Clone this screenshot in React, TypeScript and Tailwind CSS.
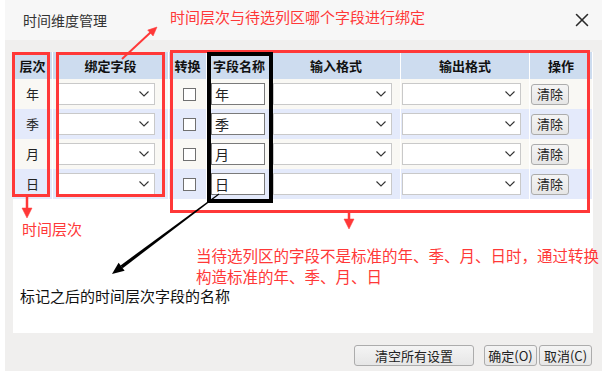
import { X } from "lucide-react";

type Row = { level: string; bg: string };

const ROWS: Row[] = [
  { level: "年", bg: "bg-[#f9f8f4]" },
  { level: "季", bg: "bg-[#e4eafb]" },
  { level: "月", bg: "bg-[#f9f8f4]" },
  { level: "日", bg: "bg-[#e4eafb]" },
];

const COLS = "grid grid-cols-[40px_116px_38px_65px_129px_129px_63px]";

function Chevron() {
  return (
    <svg width="10" height="6" viewBox="0 0 10 6" className="shrink-0">
      <polyline points="0.5,0.5 5,5 9.5,0.5" fill="none" stroke="#333" strokeWidth="1.1" />
    </svg>
  );
}

function Select({ w }: { w: string }) {
  return (
    <div className={`${w} h-[22px] bg-white border border-[#c9c9c9] flex items-center justify-end pr-[5px]`}>
      <Chevron />
    </div>
  );
}

function Cell({ children, className = "" }: { children?: React.ReactNode; className?: string }) {
  return <div className={`h-[30px] flex items-center border-r border-white ${className}`}>{children}</div>;
}

function Btn({ label, w }: { label: string; w: string }) {
  return (
    <div
      className={`${w} h-[21px] rounded-[3px] border border-[#acacac] bg-gradient-to-b from-[#f4f4f4] to-[#e6e6e6] flex items-center justify-center text-[13px] text-[#222]`}
    >
      {label}
    </div>
  );
}

export default function App() {
  return (
    <div className="relative w-[602px] h-[377px] bg-white overflow-hidden font-['Noto_Sans_CJK_SC','Noto_Sans',sans-serif] text-[#222]">
      <div className="ml-[5px] w-[597px] h-[371px] bg-[#f0efee] flex flex-col">
        {/* 标题栏 */}
        <div className="h-[40px] bg-[#f7f7f7] flex items-center justify-between pl-[18px] pr-[9px]">
          <span className="text-[14px] text-[#333]">时间维度管理</span>
          <X size={22} strokeWidth={1.7} className="text-[#2a2a2a]" />
        </div>

        {/* 表格区域 */}
        <div className="pt-[12px] pl-[8px]">
          <div className="w-[580px] h-[281px] bg-white">
            <div className={`${COLS} bg-[#cddcef] h-[27px] text-[13px] font-bold text-[#111]`}>
              {["层次", "绑定字段", "转换", "字段名称", "输入格式", "输出格式", "操作"].map((h) => (
                <div key={h} className="flex items-center justify-center border-r border-white">
                  {h}
                </div>
              ))}
            </div>
            {ROWS.map((r) => (
              <div key={r.level} className={`${COLS} ${r.bg} text-[13px]`}>
                <Cell className="justify-center">{r.level}</Cell>
                <Cell className="pl-[4px]">
                  <Select w="w-[98px]" />
                </Cell>
                <Cell className="justify-center pl-[3px]">
                  <div className="w-[13px] h-[13px] bg-white border border-[#707070]" />
                </Cell>
                <Cell className="pl-[4px]">
                  <div className="w-[54px] h-[22px] bg-white border border-[#7a7a7a] flex items-center pl-[3px] text-[14px]">
                    {r.level}
                  </div>
                </Cell>
                <Cell className="pl-[1px]">
                  <Select w="w-[119px]" />
                </Cell>
                <Cell className="pl-[1px]">
                  <Select w="w-[119px]" />
                </Cell>
                <Cell className="pl-[1px]">
                  <Btn label="清除" w="w-[38px]" />
                </Cell>
              </div>
            ))}
          </div>
        </div>

        {/* 底部按钮 */}
        <div className="flex justify-end pt-[12px] pr-[10px]">
          <Btn label="清空所有设置" w="w-[120px]" />
          <div className="ml-[10px]">
            <Btn label="确定(O)" w="w-[53px]" />
          </div>
          <div className="ml-[2px]">
            <Btn label="取消(C)" w="w-[53px]" />
          </div>
        </div>
      </div>

      {/* 标注层 */}
      <svg className="absolute inset-0 pointer-events-none" width="602" height="377" viewBox="0 0 602 377">
        <g fill="none" stroke="#ff3838" strokeWidth="3">
          <rect x="13.5" y="53.5" width="35" height="142" />
          <rect x="57.5" y="53.5" width="106" height="142" />
          <rect x="171.5" y="51.5" width="417" height="160" />
        </g>
        <rect x="209" y="54" width="62" height="147" fill="none" stroke="#000" strokeWidth="4" />

        <g fill="#ff3838" stroke="#ff3838">
          <line x1="122" y1="59" x2="151" y2="32" strokeWidth="2" />
          <polygon points="157,27 153.1,36 147.7,30.1" strokeWidth="0.5" />
          <line x1="27" y1="197" x2="27" y2="210" strokeWidth="2.5" />
          <polygon points="27,218 22,208 32,208" strokeWidth="0.5" />
          <line x1="349" y1="213" x2="349" y2="221" strokeWidth="2.5" />
          <polygon points="349,229 344,219 354,219" strokeWidth="0.5" />
        </g>

        <g fill="#000">
          <polygon points="219.3,194.4 218.7,193.6 120.5,265.4 122.7,268.2" />
          <polygon points="112,274 124.6,270.8 118.6,262.8" />
        </g>
      </svg>

      <div className="absolute left-[170px] top-[9px] text-[15px] leading-none text-[#ff3838] whitespace-nowrap">
        时间层次与待选列区哪个字段进行绑定
      </div>
      <div className="absolute left-[22px] top-[221px] text-[15px] leading-none text-[#ff3838]">时间层次</div>
      <div className="absolute left-[196px] top-[245px] text-[15.5px] leading-[21px] text-[#ff3838] whitespace-nowrap">
        <div>当待选列区的字段不是标准的年、季、月、日时，通过转换</div>
        <div>构造标准的年、季、月、日</div>
      </div>
      <div className="absolute left-[20px] top-[288px] text-[15px] leading-none text-[#111] whitespace-nowrap">
        标记之后的时间层次字段的名称
      </div>
    </div>
  );
}
